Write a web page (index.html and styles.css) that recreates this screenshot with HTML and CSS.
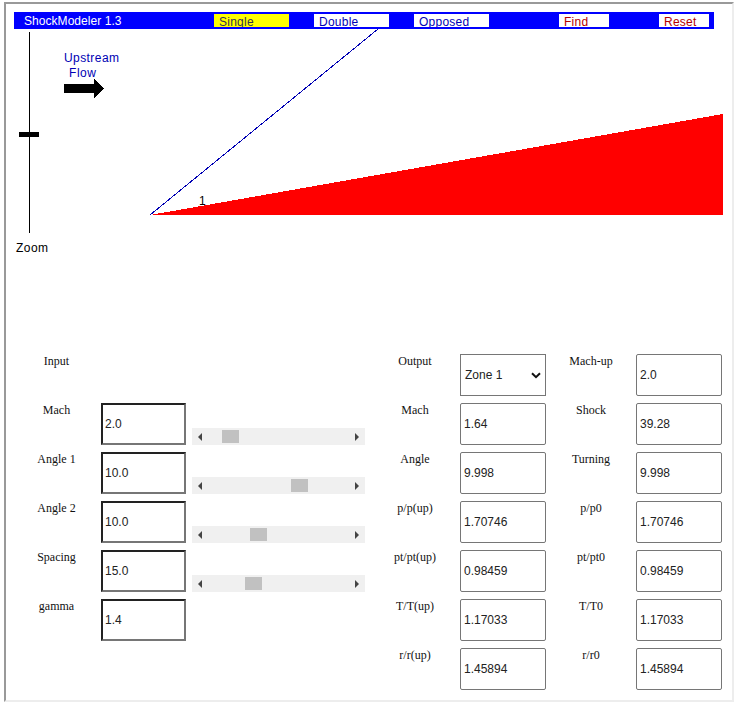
FILE: index.html
```html
<!DOCTYPE html>
<html lang="en">
<head>
<meta charset="utf-8">
<title>ShockModeler 1.3</title>
<link rel="stylesheet" href="styles.css">
</head>
<body>
<main class="applet">
  <header class="bar">
    <span class="title">ShockModeler 1.3</span>
    <span class="btn active">Single</span>
    <span class="btn">Double</span>
    <span class="btn">Opposed</span>
    <span class="btn small find">Find</span>
    <span class="btn small reset">Reset</span>
  </header>
  <svg class="view" width="714" height="325" viewBox="10 29 714 325">
    <g shape-rendering="crispEdges">
      <rect x="29" y="32" width="1" height="201"/>
      <rect x="19" y="132" width="20" height="5"/>
      <path d="M64 84H94V79L104 88.5L94 98V93H64Z"/>
      <path d="M150 215L723 114V215Z" fill="#f00"/>
      <path d="M150 215L378 29" stroke="#0000b4" fill="none"/>
    </g>
    <text x="64" y="62" fill="#0000b4" textLength="55">Upstream</text>
    <text x="69" y="77" fill="#0000b4" textLength="27">Flow</text>
    <text x="16" y="252" textLength="32">Zoom</text>
    <text x="199" y="205">1</text>
  </svg>
  <section class="panels">
    <div class="grid inputs">
      <span class="label">Input</span><span></span><span></span>
      <label class="label" for="mach">Mach</label><input id="mach" value="2.0"><div class="scroll"><i class="left"></i><b class="thumb" style="margin-left:20px"></b><i class="right"></i></div>
      <label class="label" for="a1">Angle 1</label><input id="a1" value="10.0"><div class="scroll"><i class="left"></i><b class="thumb" style="margin-left:89px"></b><i class="right"></i></div>
      <label class="label" for="a2">Angle 2</label><input id="a2" value="10.0"><div class="scroll"><i class="left"></i><b class="thumb" style="margin-left:48px"></b><i class="right"></i></div>
      <label class="label" for="sp">Spacing</label><input id="sp" value="15.0"><div class="scroll"><i class="left"></i><b class="thumb" style="margin-left:43px"></b><i class="right"></i></div>
      <label class="label" for="gm">gamma</label><input id="gm" value="1.4"><span></span>
    </div>
    <div class="grid outputs">
      <span class="label">Output</span><div class="select"><span>Zone 1</span><svg width="10" height="7" viewBox="0 0 10 7"><path d="M1 1.2L5 5.2L9 1.2" fill="none" stroke="#111" stroke-width="2"/></svg></div><span class="label">Mach-up</span><input value="2.0">
      <span class="label">Mach</span><input value="1.64"><span class="label">Shock</span><input value="39.28">
      <span class="label">Angle</span><input value="9.998"><span class="label">Turning</span><input value="9.998">
      <span class="label">p/p(up)</span><input value="1.70746"><span class="label">p/p0</span><input value="1.70746">
      <span class="label">pt/pt(up)</span><input value="0.98459"><span class="label">pt/pt0</span><input value="0.98459">
      <span class="label">T/T(up)</span><input value="1.17033"><span class="label">T/T0</span><input value="1.17033">
      <span class="label">r/r(up)</span><input value="1.45894"><span class="label">r/r0</span><input value="1.45894">
    </div>
  </section>
</main>
</body>
</html>
```
FILE: styles.css
```css
* { box-sizing: border-box; }
body { margin: 0; background: #fff; overflow: hidden; }
.applet {
  width: 730px;
  height: 700px;
  margin: 2px 0 0 4px;
  padding-top: 8px;
  border: 2px solid;
  border-color: #999 #ededed #ededed #999;
}
.bar {
  display: flex;
  width: 700px;
  height: 17px;
  margin-left: 8px;
  padding: 2px 5px 2px 10px;
  background: #00f;
  font: 12px/16px "Liberation Sans", Arial, sans-serif;
}
.title { width: 190px; color: #fff; letter-spacing: 0.05px; line-height: 14px; }
.btn {
  width: 75px;
  height: 13px;
  margin-right: 25px;
  padding-left: 5px;
  overflow: hidden;
  background: #fff;
  color: #0000b4;
  letter-spacing: 0.25px;
}
.btn.active { background: #ff0; color: #33334d; }
.btn.small { width: 50px; color: #b40000; }
.btn.find { margin: 0 50px 0 45px; }
.btn.reset { margin: 0; }
.view {
  display: block;
  margin-left: 4px;
  font: 12px "Liberation Sans", Arial, sans-serif;
}
.panels { display: flex; gap: 5px; padding-left: 6px; }
.grid { display: grid; row-gap: 7px; grid-auto-rows: 42px; }
.inputs { grid-template-columns: 89px 91px 173px; align-content: start; }
.outputs { grid-template-columns: 90px 86px 90px 86px; }
.label {
  font: 12px/14px "Liberation Serif", "Times New Roman", serif;
  text-align: center;
  color: #111;
}
input, .select {
  width: 86px;
  height: 42px;
  margin: 0;
  padding: 0 3px;
  border: 1px solid #767676;
  border-radius: 2px;
  background: #fff;
  color: #222;
  font: 12px "Liberation Sans", Arial, sans-serif;
}
.inputs input {
  width: 85px;
  padding: 0 2px;
  border: 2px solid;
  border-color: #222 #767676 #767676 #222;
  border-radius: 0;
  color: #222;
}
.select {
  display: flex;
  align-items: center;
  justify-content: space-between;
  padding: 0 4px;
  border-radius: 0;
}
.scroll {
  display: flex;
  align-items: center;
  align-self: end;
  height: 17px;
  padding: 0 6px;
  background: #f0f0f0;
}
.left, .right { border: 4px solid transparent; border-width: 4px 0; }
.left { border-right: 4px solid #444; }
.right { border-left: 4px solid #444; margin-left: auto; }
.thumb { width: 17px; height: 13px; background: #c1c1c1; }
```
